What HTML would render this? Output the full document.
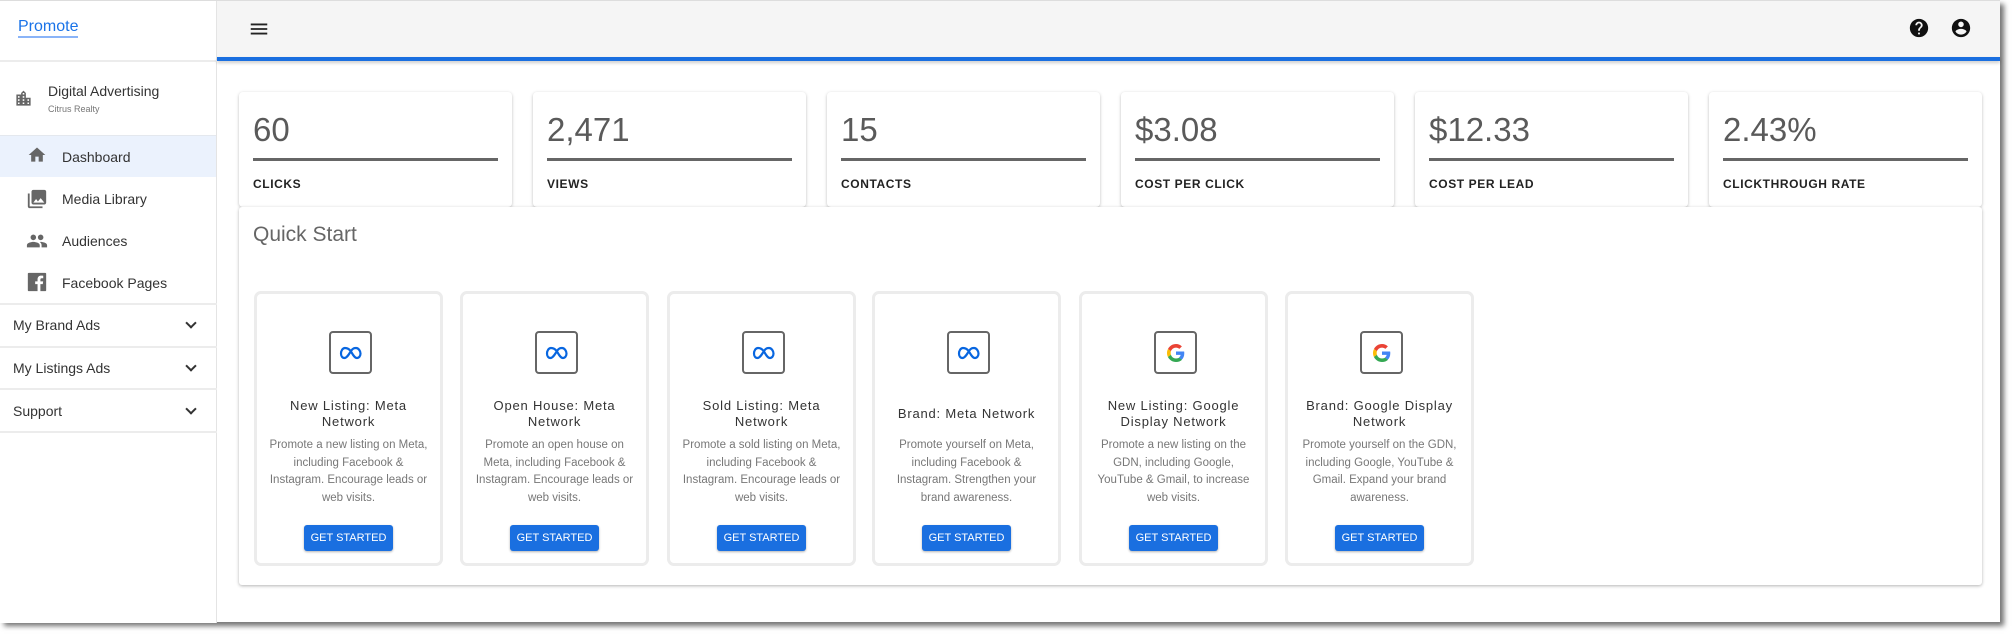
<!DOCTYPE html>
<html><head><meta charset="utf-8"><style>
*{box-sizing:border-box;margin:0;padding:0}
body{width:2015px;height:637px;background:#fff;font-family:"Liberation Sans",sans-serif;position:relative;overflow:hidden}
.frame{position:absolute;left:0;top:0;width:2000px;height:622px;background:#fff;border-top:1px solid #ddd;box-shadow:4px 4px 5px rgba(0,0,0,.55)}
.side{position:absolute;left:0;top:0;width:217px;height:622px;border-right:1px solid #e4e4e4;background:#fff}
.abs{position:absolute}
.promote{left:18px;top:16px;font-size:16px;color:#1a73e8;border-bottom:2px solid #8ab4f8;line-height:19px}
.hr{position:absolute;left:0;width:217px;height:2px;background:#ececec}
.nav{position:absolute;left:62px;font-size:14px;color:#333;transform:translateY(-50%)}
.sec{position:absolute;left:13px;font-size:14px;color:#333;transform:translateY(-50%)}
.chev{position:absolute;left:187px;width:8px;height:8px;border-right:2px solid #333;border-bottom:2px solid #333;transform:rotate(45deg)}
.top{position:absolute;left:217px;top:0;width:1783px;height:56px;background:#f5f5f5}
.blue{position:absolute;left:217px;top:56px;width:1783px;height:4px;background:#1a6fe0;box-shadow:0 2px 3px rgba(0,0,0,.2)}
.stat{position:absolute;top:91px;width:273px;height:115px;background:#fff;border-radius:4px;box-shadow:0 1px 3px rgba(0,0,0,.25)}
.stat .n{position:absolute;left:14px;top:18px;font-size:33px;color:#5a5a5a;line-height:40px}
.stat .u{position:absolute;left:14px;right:14px;top:66px;height:3px;background:#666}
.stat .l{position:absolute;left:14px;top:85px;font-size:12px;font-weight:bold;color:#222;letter-spacing:.6px}
.panel{position:absolute;left:239px;top:206px;width:1743px;height:378px;background:#fff;border-radius:3px;box-shadow:0 1px 3px rgba(0,0,0,.3)}
.qs{position:absolute;left:14px;top:16px;font-size:21px;color:#666}
.card{position:absolute;top:84px;width:189px;height:275px;border:3px solid #ececec;border-radius:7px;background:#fff;text-align:center}
.ib{position:absolute;left:72px;top:37px;width:43px;height:43px;border:2px solid #666;border-radius:4px;display:flex;align-items:center;justify-content:center}
.t{position:absolute;left:6px;right:6px;top:104px;font-size:13px;color:#333;letter-spacing:.8px;line-height:16px}
.t.one{top:112px}
.d{position:absolute;left:8px;right:8px;top:143px;font-size:11.5px;color:#777;line-height:17.5px}
.btn{position:absolute;left:47px;top:231px;width:89px;height:26px;background:#1a6fe0;color:#fff;font-size:11px;line-height:26px;border-radius:3px;box-shadow:0 1px 2px rgba(0,0,0,.3)}
</style></head><body>
<div class="frame">
<div class="side">
<div class="abs promote">Promote</div>
<div class="hr" style="top:59px"></div>
<svg class="abs" style="left:14px;top:88px" width="19" height="19" viewBox="0 0 24 24"><path fill="#666" d="M15 11V5l-3-3-3 3v2H3v14h18V11h-6zm-8 8H5v-2h2v2zm0-4H5v-2h2v2zm0-4H5V9h2v2zm6 8h-2v-2h2v2zm0-4h-2v-2h2v2zm0-4h-2V9h2v2zm0-4h-2V5h2v2zm6 12h-2v-2h2v2zm0-4h-2v-2h2v2z"/></svg>
<div class="abs" style="left:48px;top:82px;font-size:14px;color:#333">Digital Advertising</div>
<div class="abs" style="left:48px;top:103px;font-size:9px;color:#777">Citrus Realty</div>
<div class="abs" style="left:0;top:134px;width:216px;height:42px;background:#ebf2fd;border-top:1px solid #e4e8ee"></div>
<svg class="abs" style="left:27px;top:144px" width="20" height="20" viewBox="0 0 24 24"><path fill="#666" d="M10 20v-6h4v6h5v-8h3L12 3 2 12h3v8z"/></svg>
<div class="nav" style="top:156px">Dashboard</div>
<svg class="abs" style="left:26px;top:187px" width="22" height="22" viewBox="0 0 24 24"><path fill="#666" d="M22 16V4c0-1.1-.9-2-2-2H8c-1.1 0-2 .9-2 2v12c0 1.1.9 2 2 2h12c1.1 0 2-.9 2-2zm-11-4l2.030 2.71L16 11l4 5H8l3-4zM2 6v14c0 1.1.9 2 2 2h14v-2H4V6H2z"/></svg>
<div class="nav" style="top:198px">Media Library</div>
<svg class="abs" style="left:26px;top:229px" width="22" height="22" viewBox="0 0 24 24"><path fill="#666" d="M16 11c1.66 0 2.99-1.34 2.99-3S17.66 5 16 5c-1.66 0-3 1.34-3 3s1.34 3 3 3zm-8 0c1.66 0 2.99-1.34 2.99-3S9.66 5 8 5C6.34 5 5 6.34 5 8s1.34 3 3 3zm0 2c-2.33 0-7 1.17-7 3.5V19h14v-2.5c0-2.33-4.670-3.5-7-3.5zm8 0c-.29 0-.62.02-.97.05 1.16.84 1.97 1.97 1.97 3.45V19h6v-2.5c0-2.33-4.67-3.5-7-3.5z"/></svg>
<div class="nav" style="top:240px">Audiences</div>
<svg class="abs" style="left:26px;top:270px" width="22" height="22" viewBox="0 0 24 24"><path fill="#666" d="M21 2H3c-.55 0-1 .45-1 1v18c0 .55.45 1 1 1h9.6v-7.7H10v-3h2.6V9.1c0-2.6 1.6-4 3.9-4 1.1 0 2.1.1 2.3.1v2.7h-1.6c-1.3 0-1.5.6-1.5 1.5v1.9h3l-.4 3h-2.6V22H21c.55 0 1-.45 1-1V3c0-.55-.45-1-1-1z"/></svg>
<div class="nav" style="top:282px">Facebook Pages</div>
<div class="hr" style="top:302px"></div>
<div class="sec" style="top:324px">My Brand Ads</div><div class="chev" style="top:318px"></div>
<div class="hr" style="top:345px"></div>
<div class="sec" style="top:367px">My Listings Ads</div><div class="chev" style="top:361px"></div>
<div class="hr" style="top:387px"></div>
<div class="sec" style="top:410px">Support</div><div class="chev" style="top:404px"></div>
<div class="hr" style="top:430px"></div>
</div>
<div class="top"></div>
<div class="blue"></div>
<svg class="abs" style="left:248px;top:17px" width="22" height="22" viewBox="0 0 24 24"><path fill="#222" d="M3 18h18v-2H3v2zm0-5h18v-2H3v2zm0-7v2h18V6H3z"/></svg>
<svg class="abs" style="left:1908px;top:16px" width="22" height="22" viewBox="0 0 24 24"><path fill="#111" d="M12 2C6.48 2 2 6.48 2 12s4.48 10 10 10 10-4.48 10-10S17.52 2 12 2zm1 17h-2v-2h2v2zm2.07-7.75l-.9.92C13.45 12.9 13 13.5 13 15h-2v-.5c0-1.1.45-2.1 1.17-2.830l1.24-1.26c.37-.36.59-.86.59-1.41 0-1.1-.9-2-2-2s-2 .9-2 2H8c0-2.21 1.79-4 4-4s4 1.79 4 4c0 .88-.36 1.68-.93 2.25z"/></svg>
<svg class="abs" style="left:1950px;top:16px" width="22" height="22" viewBox="0 0 24 24"><path fill="#111" d="M12 2C6.48 2 2 6.48 2 12s4.48 10 10 10 10-4.48 10-10S17.52 2 12 2zm0 3c1.66 0 3 1.34 3 3s-1.34 3-3 3-3-1.34-3-3 1.34-3 3-3zm0 14.2c-2.5 0-4.71-1.28-6-3.22.03-1.99 4-3.08 6-3.08 1.99 0 5.97 1.09 6 3.08-1.29 1.940-3.5 3.22-6 3.22z"/></svg>

<div class="stat" style="left:239px"><div class="n">60</div><div class="u"></div><div class="l">CLICKS</div></div>
<div class="stat" style="left:533px"><div class="n">2,471</div><div class="u"></div><div class="l">VIEWS</div></div>
<div class="stat" style="left:827px"><div class="n">15</div><div class="u"></div><div class="l">CONTACTS</div></div>
<div class="stat" style="left:1121px"><div class="n">$3.08</div><div class="u"></div><div class="l">COST PER CLICK</div></div>
<div class="stat" style="left:1415px"><div class="n">$12.33</div><div class="u"></div><div class="l">COST PER LEAD</div></div>
<div class="stat" style="left:1709px"><div class="n">2.43%</div><div class="u"></div><div class="l">CLICKTHROUGH RATE</div></div>

<div class="panel">
<div class="qs">Quick Start</div>
<div class="card" style="left:15px"><div class="ib"><svg width="24" height="14" viewBox="0 0 24 14"><path d="M6 2C3.5 2 2 5 2 7.5S3.3 12 5.5 12c2.5 0 4.5-4 6.5-7 2-3 3.5-3 5-3 2.5 0 4.5 3 4.5 5.5S20 12 18 12c-2.5 0-4.5-4-6-6.5C10 2.5 8 2 6 2z" fill="none" stroke="#0866e0" stroke-width="2.2"/></svg></div><div class="t">New Listing: Meta Network</div><div class="d">Promote a new listing on Meta, including Facebook &amp; Instagram. Encourage leads or web visits.</div><div class="btn">GET STARTED</div></div>
<div class="card" style="left:221px"><div class="ib"><svg width="24" height="14" viewBox="0 0 24 14"><path d="M6 2C3.5 2 2 5 2 7.5S3.3 12 5.5 12c2.5 0 4.5-4 6.5-7 2-3 3.5-3 5-3 2.5 0 4.5 3 4.5 5.5S20 12 18 12c-2.5 0-4.5-4-6-6.5C10 2.5 8 2 6 2z" fill="none" stroke="#0866e0" stroke-width="2.2"/></svg></div><div class="t">Open House: Meta Network</div><div class="d">Promote an open house on Meta, including Facebook &amp; Instagram. Encourage leads or web visits.</div><div class="btn">GET STARTED</div></div>
<div class="card" style="left:428px"><div class="ib"><svg width="24" height="14" viewBox="0 0 24 14"><path d="M6 2C3.5 2 2 5 2 7.5S3.3 12 5.5 12c2.5 0 4.5-4 6.5-7 2-3 3.5-3 5-3 2.5 0 4.5 3 4.5 5.5S20 12 18 12c-2.5 0-4.5-4-6-6.5C10 2.5 8 2 6 2z" fill="none" stroke="#0866e0" stroke-width="2.2"/></svg></div><div class="t">Sold Listing: Meta Network</div><div class="d">Promote a sold listing on Meta, including Facebook &amp; Instagram. Encourage leads or web visits.</div><div class="btn">GET STARTED</div></div>
<div class="card" style="left:633px"><div class="ib"><svg width="24" height="14" viewBox="0 0 24 14"><path d="M6 2C3.5 2 2 5 2 7.5S3.3 12 5.5 12c2.5 0 4.5-4 6.5-7 2-3 3.5-3 5-3 2.5 0 4.5 3 4.5 5.5S20 12 18 12c-2.5 0-4.5-4-6-6.5C10 2.5 8 2 6 2z" fill="none" stroke="#0866e0" stroke-width="2.2"/></svg></div><div class="t one">Brand: Meta Network</div><div class="d">Promote yourself on Meta, including Facebook &amp; Instagram. Strengthen your brand awareness.</div><div class="btn">GET STARTED</div></div>
<div class="card" style="left:840px"><div class="ib"><svg width="18" height="18" viewBox="0 0 48 48"><path fill="#EA4335" d="M24 9.5c3.5 0 6.6 1.2 9 3.5l6.7-6.7C35.6 2.4 30.2 0 24 0 14.6 0 6.6 5.4 2.6 13.3l7.8 6.1C12.3 13.6 17.7 9.5 24 9.5z"/><path fill="#4285F4" d="M46.1 24.5c0-1.6-.1-3.1-.4-4.5H24v9h12.4c-.5 2.9-2.2 5.4-4.7 7l7.6 5.9c4.4-4.1 6.8-10.1 6.8-17.4z"/><path fill="#FBBC05" d="M10.5 28.6c-.5-1.4-.8-3-.8-4.6s.3-3.2.8-4.6l-7.9-6.1C.9 16.6 0 20.2 0 24s.9 7.4 2.6 10.7l7.9-6.1z"/><path fill="#34A853" d="M24 48c6.5 0 11.9-2.1 15.9-5.8l-7.6-5.9c-2.1 1.4-4.9 2.3-8.3 2.3-6.3 0-11.7-4.2-13.6-10l-7.9 6.1C6.6 42.6 14.6 48 24 48z"/></svg></div><div class="t">New Listing: Google Display Network</div><div class="d">Promote a new listing on the GDN, including Google, YouTube &amp; Gmail, to increase web visits.</div><div class="btn">GET STARTED</div></div>
<div class="card" style="left:1046px"><div class="ib"><svg width="18" height="18" viewBox="0 0 48 48"><path fill="#EA4335" d="M24 9.5c3.5 0 6.6 1.2 9 3.5l6.7-6.7C35.6 2.4 30.2 0 24 0 14.6 0 6.6 5.4 2.6 13.3l7.8 6.1C12.3 13.6 17.7 9.5 24 9.5z"/><path fill="#4285F4" d="M46.1 24.5c0-1.6-.1-3.1-.4-4.5H24v9h12.4c-.5 2.9-2.2 5.4-4.7 7l7.6 5.9c4.4-4.1 6.8-10.1 6.8-17.4z"/><path fill="#FBBC05" d="M10.5 28.6c-.5-1.4-.8-3-.8-4.6s.3-3.2.8-4.6l-7.9-6.1C.9 16.6 0 20.2 0 24s.9 7.4 2.6 10.7l7.9-6.1z"/><path fill="#34A853" d="M24 48c6.5 0 11.9-2.1 15.9-5.8l-7.6-5.9c-2.1 1.4-4.9 2.3-8.3 2.3-6.3 0-11.7-4.2-13.6-10l-7.9 6.1C6.6 42.6 14.6 48 24 48z"/></svg></div><div class="t">Brand: Google Display Network</div><div class="d">Promote yourself on the GDN, including Google, YouTube &amp; Gmail. Expand your brand awareness.</div><div class="btn">GET STARTED</div></div>
</div>
</div>
</body></html>
